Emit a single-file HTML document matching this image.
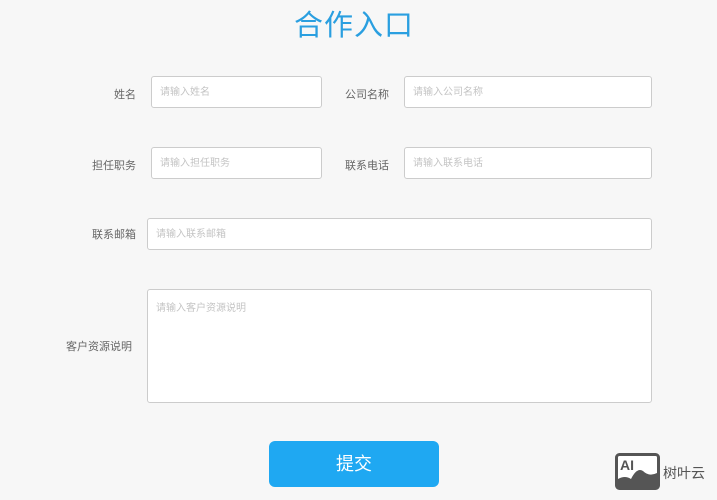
<!DOCTYPE html>
<html><head><meta charset="utf-8"><style>
body{margin:0;width:717px;height:500px;background:#f7f7f7;font-family:"Liberation Sans","Noto Sans CJK SC",sans-serif;position:relative;overflow:hidden}
.a{position:absolute}
h1{position:absolute;left:0;width:708px;top:2px;margin:0;text-align:center;font-size:29px;font-weight:normal;color:#2a9fe0;letter-spacing:1px}
.l{position:absolute;font-size:11px;color:#666;text-align:right;width:100px}
.i{position:absolute;background:#fff;border:1px solid #ccc;border-radius:3px;box-sizing:border-box;font-size:10px;color:#c4c4c4;padding-left:8px;padding-top:3px}
.btn{position:absolute;left:269px;top:441px;width:170px;height:46px;background:#1fa8f2;border-radius:6px;color:#fff;font-size:18px;text-align:center;line-height:46px}
</style></head><body>
<h1>合作入口</h1>
<div class="l" style="left:36px;top:86px">姓名</div>
<div class="i" style="left:151px;top:76px;width:171px;height:32px;line-height:26px">请输入姓名</div>
<div class="l" style="left:289px;top:86px">公司名称</div>
<div class="i" style="left:404px;top:76px;width:248px;height:32px;line-height:26px">请输入公司名称</div>
<div class="l" style="left:36px;top:157px">担任职务</div>
<div class="i" style="left:151px;top:147px;width:171px;height:32px;line-height:26px">请输入担任职务</div>
<div class="l" style="left:289px;top:157px">联系电话</div>
<div class="i" style="left:404px;top:147px;width:248px;height:32px;line-height:26px">请输入联系电话</div>
<div class="l" style="left:36px;top:226px">联系邮箱</div>
<div class="i" style="left:147px;top:218px;width:505px;height:32px;line-height:26px">请输入联系邮箱</div>
<div class="l" style="left:32px;top:338px">客户资源说明</div>
<div class="i" style="left:147px;top:289px;width:505px;height:114px;padding-top:12px;line-height:14px">请输入客户资源说明</div>
<div class="btn">提交</div>
<svg class="a" style="left:615px;top:453px" width="45" height="37" viewBox="0 0 45 37">
<rect x="1.5" y="1.5" width="42" height="34" rx="3" fill="#fff" stroke="#555" stroke-width="3"/>
<path d="M3 34 L3 26 Q10 22 16 26 Q22 14 28 18 Q34 24 42 20 L42 34Z" fill="#555"/>
<text x="5" y="17" font-size="14" font-weight="bold" fill="#555" font-family="Liberation Sans">AI</text>
</svg>
<div class="a" style="left:663px;top:463px;font-size:14px;color:#555">树叶云</div>
</body></html>
